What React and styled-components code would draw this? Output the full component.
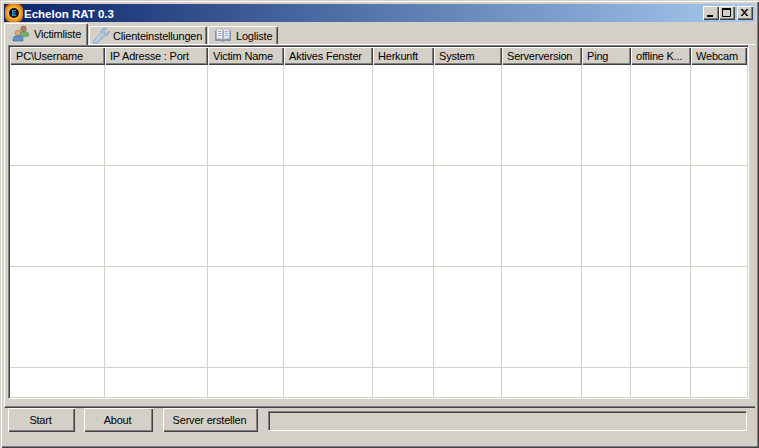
import styled, { createGlobalStyle } from "styled-components";

const GlobalStyle = createGlobalStyle`
  html, body {
    margin: 0;
    padding: 0;
    background: #d4d0c8;
  }
`;

const Window = styled.div`
  box-sizing: border-box;
  width: 759px;
  height: 448px;
  display: flex;
  flex-direction: column;
  padding: 4px;
  background: #d4d0c8;
  color: #000;
  font-family: "Liberation Sans", Arial, sans-serif;
  font-size: 11px;
  letter-spacing: -0.2px;
  box-shadow: inset 1px 1px 0 #d4d0c8, inset 2px 2px 0 #fff, inset -1px -1px 0 #404040, inset -2px -2px 0 #808080;
`;

const TitleBar = styled.div`
  height: 18px;
  flex-shrink: 0;
  display: flex;
  align-items: center;
  padding-right: 2px;
  background: linear-gradient(90deg, #0a246a, #a6caf0);
`;

const AppIcon = styled.svg`
  width: 18px;
  height: 18px;
  margin-left: 1px;
  margin-right: 1px;
  flex-shrink: 0;
`;

const TitleText = styled.span`
  flex: 1;
  padding-top: 1px;
  color: #fff;
  font-size: 11.5px;
  font-weight: 700;
  letter-spacing: 0;
`;

const CaptionButton = styled.button`
  box-sizing: border-box;
  width: 16px;
  height: 14px;
  margin-left: ${(p) => (p.$gap ? "2px" : "0")};
  padding: 0;
  border: 0;
  display: flex;
  align-items: center;
  justify-content: center;
  background: #d4d0c8;
  box-shadow: inset 1px 1px 0 #fff, inset -1px -1px 0 #404040, inset -2px -2px 0 #808080;
`;

const TabStrip = styled.div`
  height: 22px;
  flex-shrink: 0;
  display: flex;
  align-items: flex-end;
`;

const Tab = styled.div`
  box-sizing: border-box;
  width: ${(p) => p.$width}px;
  height: ${(p) => (p.$active ? 22 : 18)}px;
  margin-left: ${(p) => (p.$active ? 0 : 1)}px;
  margin-bottom: ${(p) => (p.$active ? -1 : 0)}px;
  padding-left: ${(p) => p.$pad}px;
  padding-bottom: ${(p) => (p.$active ? 2 : 0)}px;
  display: flex;
  align-items: center;
  gap: ${(p) => p.$gap}px;
  border-top: 1px solid #fff;
  border-left: 1px solid #fff;
  border-right: 1px solid #404040;
  border-radius: 2px 2px 0 0;
  background: #d4d0c8;
  box-shadow: inset -1px 0 0 #808080;
  white-space: nowrap;
  ${(p) => (p.$active ? "position: relative; z-index: 1;" : "")}
`;

const TabIcon = styled.svg`
  width: 18px;
  height: 17px;
  flex-shrink: 0;
`;

const Panel = styled.div`
  flex: 1;
  min-height: 0;
  display: flex;
  flex-direction: column;
  box-sizing: border-box;
  padding: 0 6px 8px 3px;
  border-top: 1px solid #fff;
  border-left: 1px solid #fff;
  border-bottom: 1px solid #404040;
  box-shadow: inset 0 -1px 0 #808080;
`;

const ListView = styled.div`
  flex: 1;
  min-height: 0;
  display: flex;
  flex-direction: column;
  overflow: hidden;
  background: #fff;
  border-top: 1px solid #808080;
  border-left: 1px solid #808080;
  border-bottom: 1px solid #fff;
  border-right: 1px solid #fff;
  box-shadow: inset 1px 1px 0 #404040, inset -1px -1px 0 #d4d0c8;
  padding: 1px 1px 1px 1px;
`;

const columns = "95px 103px 76px 89px 61px 68px 80px 49px 60px 56px";

const HeaderRow = styled.div`
  display: grid;
  grid-template-columns: ${columns};
  height: 18px;
  flex-shrink: 0;
`;

const HeaderCell = styled.div`
  box-sizing: border-box;
  padding: 1px 0 0 5px;
  line-height: 17px;
  white-space: nowrap;
  overflow: hidden;
  background: #d4d0c8;
  box-shadow: inset 1px 1px 0 #fff, inset -1px -1px 0 #404040, inset -2px -2px 0 #808080;
  &:first-child {
    padding-left: 6px;
  }
`;

const Row = styled.div`
  display: grid;
  grid-template-columns: ${columns};
  height: ${(p) => p.$height}px;
  flex-shrink: 0;
  box-sizing: border-box;
  border-bottom: ${(p) => (p.$last ? "0" : "1px solid #d4d0c8")};
`;

const Cell = styled.div`
  box-sizing: border-box;
  border-right: 1px solid #d4d0c8;
  &:last-child {
    border-right: 0;
  }
`;

const BottomBar = styled.div`
  height: 36px;
  flex-shrink: 0;
  display: flex;
  align-items: flex-start;
  padding: 0 8px 0 4px;
  box-sizing: border-box;
`;

const Button = styled.button`
  box-sizing: border-box;
  width: ${(p) => p.$width}px;
  height: 24px;
  margin-right: ${(p) => p.$gap}px;
  padding: 0 2px 0 0;
  border: 0;
  background: #d4d0c8;
  color: #000;
  font: inherit;
  letter-spacing: inherit;
  box-shadow: inset 1px 1px 0 #fff, inset -1px -1px 0 #404040, inset -2px -2px 0 #808080;
`;

const StatusBox = styled.div`
  flex: 1;
  height: 20px;
  margin-top: 3px;
  box-sizing: border-box;
  border-top: 1px solid #808080;
  border-left: 1px solid #808080;
  border-bottom: 1px solid #fff;
  border-right: 1px solid #fff;
  box-shadow: inset 1px 1px 0 #404040;
`;

const headers = [
  "PC\\Username",
  "IP Adresse : Port",
  "Victim Name",
  "Aktives Fenster",
  "Herkunft",
  "System",
  "Serverversion",
  "Ping",
  "offline K...",
  "Webcam",
];

const rowHeights = [101, 101, 101, 30];

function UsersIcon() {
  return (
    <TabIcon viewBox="0 0 18 17">
      <circle cx="11.500" cy="3.800" r="2.700" fill="#b98058" stroke="#7a5a3c" strokeWidth="0.6" />
      <path d="M8 12V9c0-1.500 1-2.300 2.500-2.300h2.500c2 0 3.500 .8 3.500 2.500V11z" fill="#6fb56a" stroke="#4a8048" strokeWidth="0.6" />
      <circle cx="6" cy="8" r="2.700" fill="#dfa982" stroke="#8a6a50" strokeWidth="0.6" />
      <path d="M1 16v-2.500C1 12 2.400 11 4 11h4c1.700 0 3 1 3 2.500V16z" fill="#5f8fd0" stroke="#4a6a9c" strokeWidth="0.6" />
    </TabIcon>
  );
}

function WrenchIcon() {
  return (
    <TabIcon viewBox="0 0 18 17">
      <path
        d="M1.500 14.500 9 6.500C8.600 4 10 1.600 12.600 1.200c.8-.1 1.500 0 2 .2L12 4.200l.6 2 2 .5 2.500-2.600c.3 2.800-1.800 5-4.600 4.900L4.500 16.500c-1.200.8-3.800-.6-3-2z"
        fill="#a9c4e8"
        stroke="#7f94b4"
        strokeWidth="0.7"
      />
      <path d="M3 14.500 10 7" stroke="#dfeaf8" strokeWidth="1" fill="none" />
    </TabIcon>
  );
}

function BookIcon() {
  return (
    <TabIcon viewBox="0 0 18 17">
      <path d="M1 3.500h16v10.500H10.500l-1.500 1-1.500-1H1z" fill="#8a93ac" />
      <path d="M2.500 2.500C4.500 1.800 6.800 1.800 8.500 3v9.500C6.800 11.500 4.500 11.500 2.500 12z" fill="#eef1f4" stroke="#9aa2b2" strokeWidth="0.5" />
      <path d="M15.500 2.500C13.500 1.800 11.200 1.800 9.500 3v9.500c1.700-1 4-1 6-.5z" fill="#e3e8ee" stroke="#9aa2b2" strokeWidth="0.5" />
      <path d="M4 4.500h3M4 6.500h3M4 8.500h3M11 4.500h3M11 6.500h3M11 8.500h3" stroke="#8f9bb0" strokeWidth="0.8" />
    </TabIcon>
  );
}

export default function App() {
  return (
    <>
      <GlobalStyle />
      <Window>
        <TitleBar>
          <AppIcon viewBox="0 0 18 18">
            <defs>
              <radialGradient id="glow" cx="50%" cy="50%" r="62%">
                <stop offset="50%" stopColor="#f9b648" />
                <stop offset="80%" stopColor="#e6800f" />
                <stop offset="100%" stopColor="#7a4212" />
              </radialGradient>
            </defs>
            <rect x="0" y="0" width="18" height="18" rx="5" fill="url(#glow)" />
            <circle cx="9" cy="9" r="5" fill="#1c1410" />
            <path d="M7 6h4v1.300H8.500v1h2v1.300h-2v1h2.500V12H7z" fill="#2f8fc0" />
          </AppIcon>
          <TitleText>Echelon RAT 0.3</TitleText>
          <CaptionButton>
            <svg width="16" height="14" viewBox="0 0 16 14">
              <rect x="4" y="9" width="6" height="2" fill="#000" />
            </svg>
          </CaptionButton>
          <CaptionButton>
            <svg width="16" height="14" viewBox="0 0 16 14">
              <path d="M3.500 3.500h8v7h-8z" fill="none" stroke="#000" strokeWidth="1" />
              <rect x="3" y="2" width="9" height="2" fill="#000" />
            </svg>
          </CaptionButton>
          <CaptionButton $gap>
            <svg width="16" height="14" viewBox="0 0 16 14">
              <path d="M4 3l6 7M5 3l6 7M10 3l-6 7M11 3l-6 7" stroke="#000" strokeWidth="1" fill="none" />
            </svg>
          </CaptionButton>
        </TitleBar>

        <TabStrip>
          <Tab $active $width={84} $pad={7} $gap={4}>
            <UsersIcon />
            <span>Victimliste</span>
          </Tab>
          <Tab $width={118} $pad={2} $gap={3}>
            <WrenchIcon />
            <span>Clienteinstellungen</span>
          </Tab>
          <Tab $width={70} $pad={5} $gap={4}>
            <BookIcon />
            <span>Logliste</span>
          </Tab>
        </TabStrip>

        <Panel>
          <ListView>
            <HeaderRow>
              {headers.map((h) => (
                <HeaderCell key={h}>{h}</HeaderCell>
              ))}
            </HeaderRow>
            {rowHeights.map((height, i) => (
              <Row key={i} $height={height} $last={i === rowHeights.length - 1}>
                {headers.map((h) => (
                  <Cell key={h} />
                ))}
              </Row>
            ))}
          </ListView>
        </Panel>

        <BottomBar>
          <Button $width={67} $gap={9}>Start</Button>
          <Button $width={69} $gap={10}>About</Button>
          <Button $width={95} $gap={10}>Server erstellen</Button>
          <StatusBox />
        </BottomBar>
      </Window>
    </>
  );
}
